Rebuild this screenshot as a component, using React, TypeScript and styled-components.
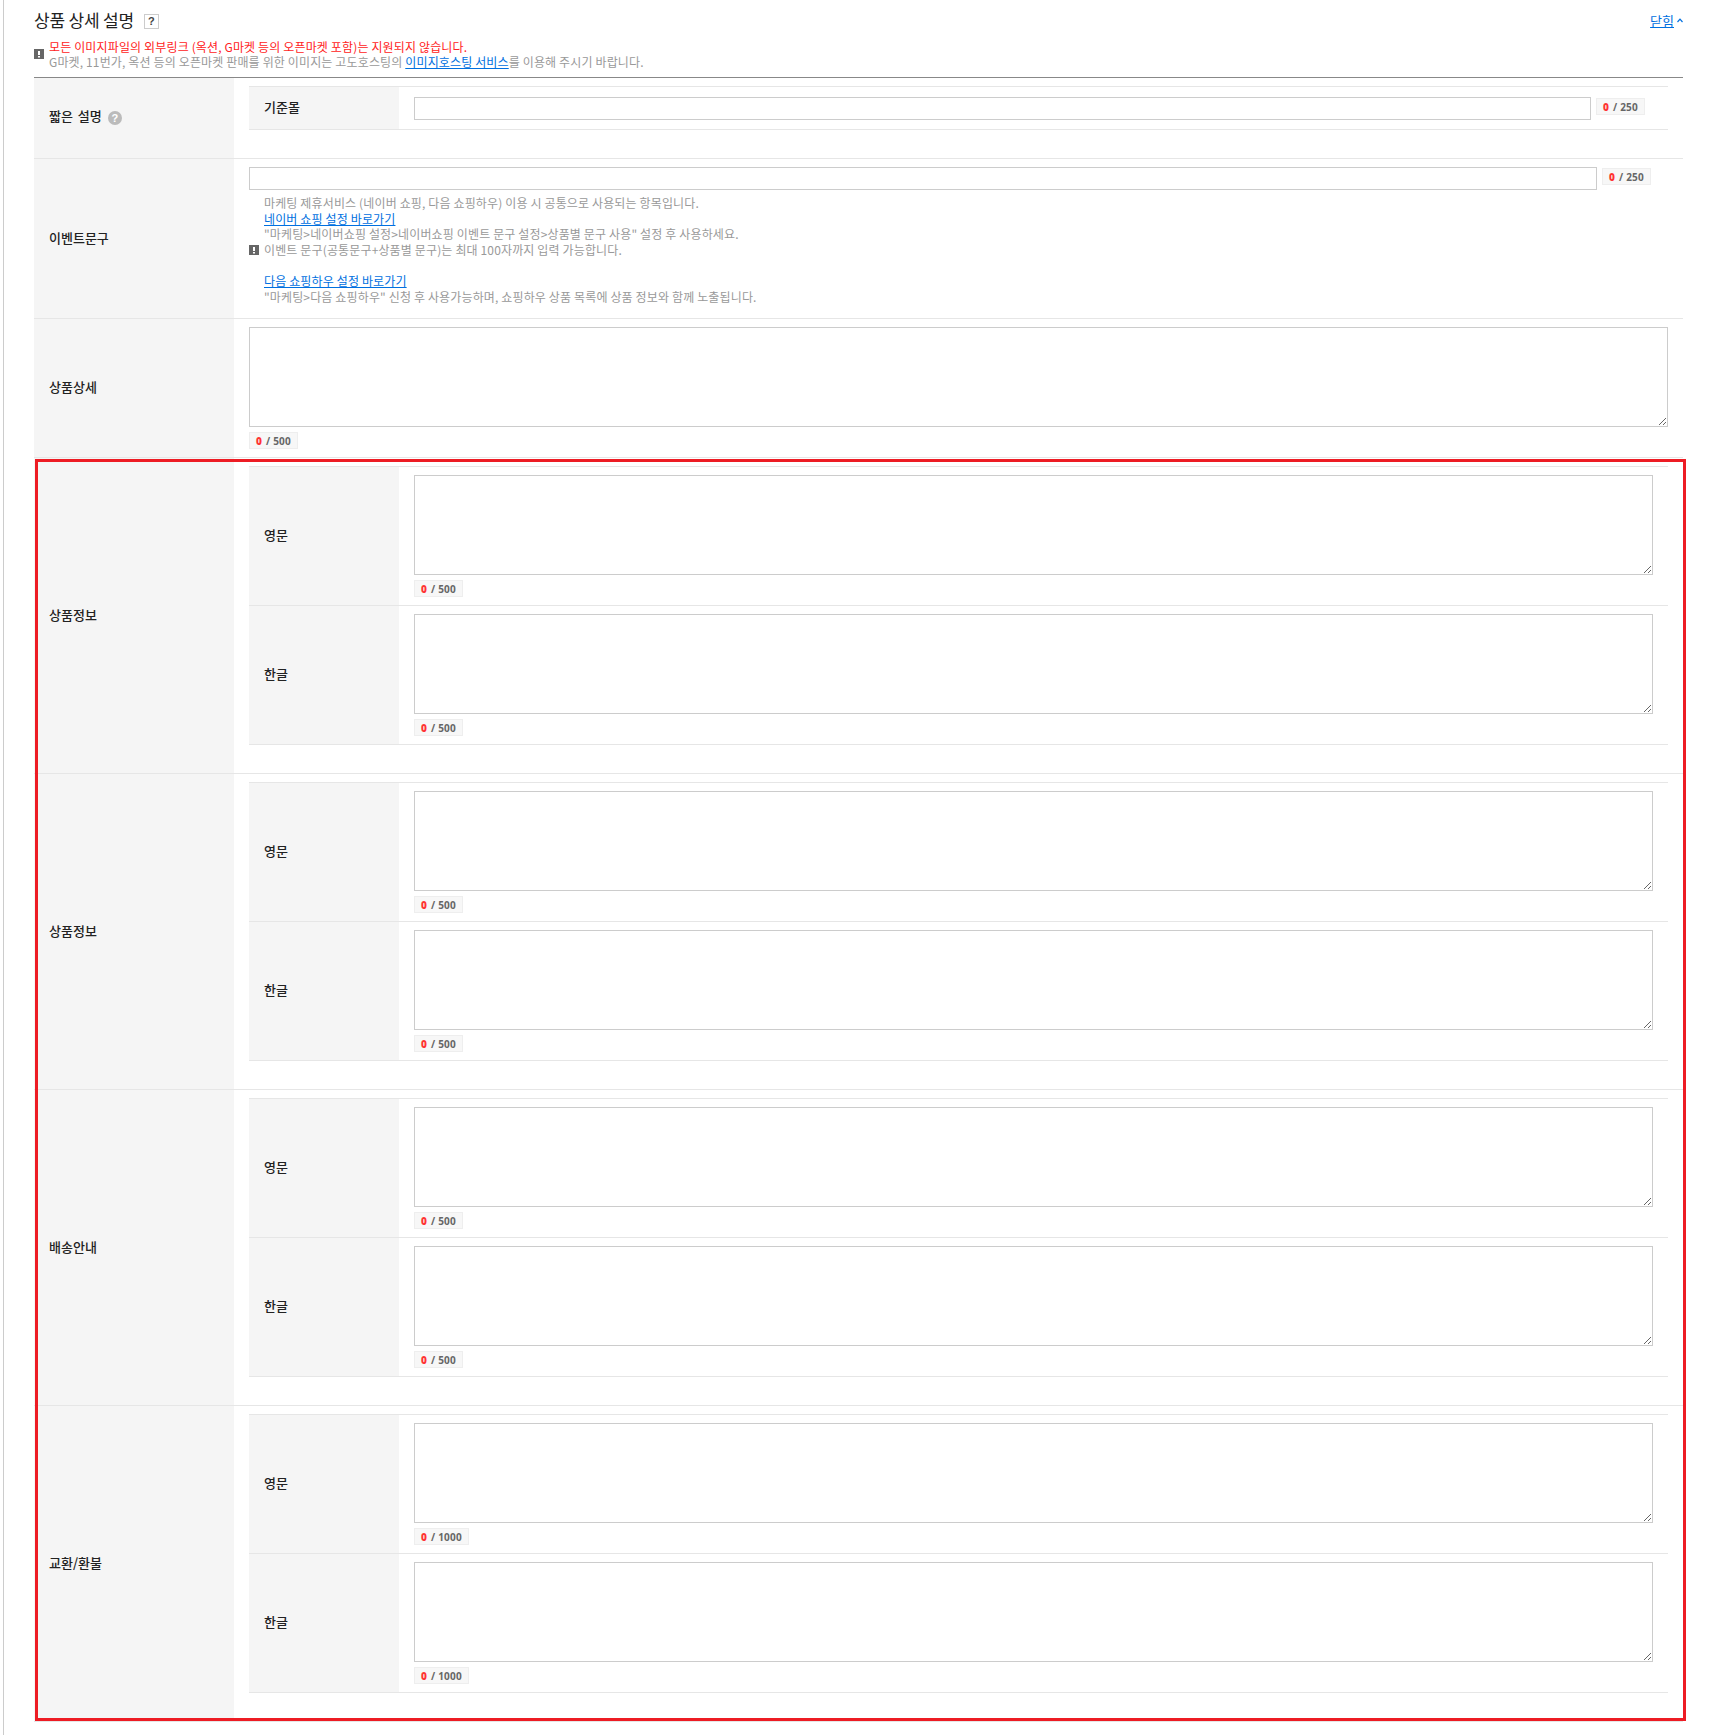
import React from "react";
import styled, { createGlobalStyle } from "styled-components";

const GlobalStyle = createGlobalStyle`
  html, body {
    margin: 0;
    padding: 0;
    background: #fff;
  }
  body {
    font-family: "Noto Sans CJK KR", "Noto Sans", sans-serif;
    font-size: 12px;
    color: #333;
  }
`;

const Page = styled.div`
  position: relative;
  box-sizing: border-box;
  min-height: 1735px;
  margin-left: 3px;
  padding: 0 30px;
  border-left: 1px solid #ccc;
`;

const Highlight = styled.div`
  position: absolute;
  top: 459px;
  left: 31px;
  width: 1651px;
  height: 1262px;
  box-sizing: border-box;
  border: 3px solid #ed1c24;
  pointer-events: none;
`;

const Header = styled.div`
  box-sizing: border-box;
  height: 78px;
  padding-top: 8px;
  border-bottom: 1px solid #888;
`;

const TitleRow = styled.div`
  display: flex;
  align-items: center;
  justify-content: space-between;
  height: 24px;
`;

const TitleGroup = styled.div`
  display: flex;
  align-items: center;
  gap: 10px;
`;

const Title = styled.h3`
  margin: 0;
  font-size: 17px;
  font-weight: 400;
  letter-spacing: -0.2px;
  color: #222;
  line-height: 24px;
`;

const HelpBox = styled.span`
  display: flex;
  align-items: center;
  justify-content: center;
  box-sizing: border-box;
  width: 15px;
  height: 15px;
  margin-top: 2px;
  border: 1px solid #ccc;
  font-family: "Liberation Sans", sans-serif;
  font-size: 11px;
  font-weight: 700;
  color: #444;
`;

const CloseLink = styled.a`
  display: flex;
  align-items: center;
  gap: 3px;
  font-size: 13px;
  color: #0070e0;
  span {
    text-decoration: underline;
  }
`;

const Notice = styled.div`
  display: flex;
  align-items: center;
  gap: ${({ $gap }: { $gap: number }) => $gap}px;
  margin-top: ${({ $top }: { $top: number }) => $top}px;
`;

const NoticeText = styled.div`
  font-size: 12px;
  letter-spacing: 0.14px;
  line-height: ${({ $line = 15.6 }: { $line?: number }) => $line}px;
  color: #999;
`;

const Red = styled.div`
  color: #f22;
`;

const Link = styled.a`
  color: #0070e0;
  text-decoration: underline;
`;

const Row = styled.div`
  display: flex;
  border-bottom: 1px solid #e6e6e6;
`;

const RowLabel = styled.div`
  display: flex;
  flex: 0 0 200px;
  align-items: center;
  gap: 6px;
  box-sizing: border-box;
  padding: 0 0 ${({ $lift = 3 }: { $lift?: number }) => $lift}px 15px;
  background: #f5f5f5;
  font-size: 13px;
  font-weight: 500;
  word-spacing: 2px;
  color: #222;
`;

const HelpCircle = styled.span`
  display: flex;
  align-items: center;
  justify-content: center;
  width: 14px;
  height: 14px;
  margin-top: 6px;
  border-radius: 50%;
  background: #bbb;
  font-family: "Liberation Sans", sans-serif;
  font-size: 11px;
  font-weight: 700;
  color: #fff;
`;

const RowBody = styled.div`
  flex: 1;
  min-width: 0;
  padding: 8px 15px ${({ $bottom }: { $bottom: number }) => $bottom}px;
`;

const SubRow = styled.div`
  display: flex;
  border-top: 1px solid #e6e6e6;
  &:last-child {
    border-bottom: 1px solid #e6e6e6;
  }
`;

const SubLabel = styled.div`
  display: flex;
  flex: 0 0 150px;
  align-items: center;
  box-sizing: border-box;
  padding: 0 0 3px 15px;
  background: #f5f5f5;
  font-size: 13px;
  font-weight: 500;
  color: #222;
`;

const SubBody = styled.div`
  flex: 1;
  min-width: 0;
  padding: 8px 15px;
`;

const SingleBody = styled(SubBody)`
  padding: 10px 15px 9px;
`;

const InputLine = styled.div`
  display: flex;
  align-items: flex-start;
  gap: 5px;
`;

const TextInput = styled.input`
  display: block;
  box-sizing: border-box;
  flex: 0 0 auto;
  width: ${({ $width }: { $width: number }) => $width}px;
  height: 23px;
  margin: 0;
  padding: 0 4px;
  border: 1px solid #ccc;
  border-radius: 0;
  outline: none;
  background: #fff;
`;

const Area = styled.textarea`
  display: block;
  box-sizing: border-box;
  width: 100%;
  height: 100px;
  margin: 0;
  padding: 4px;
  border: 1px solid #ccc;
  border-radius: 0;
  outline: none;
  resize: vertical;
  background: #fff;
`;

const Counter = styled.span`
  display: inline-flex;
  align-items: center;
  gap: 4px;
  box-sizing: border-box;
  height: 17px;
  margin-top: ${({ $top }: { $top: number }) => $top}px;
  padding: 0 6px;
  border: 1px solid #eee;
  background: #f7f7f7;
  font-family: "Open Sans", sans-serif;
  font-size: 10px;
  font-weight: 700;
  letter-spacing: 0.2px;
  color: #666;
  b {
    color: #f33;
  }
`;

const CounterLine = styled.div`
  display: flex;
  height: 17px;
  margin-top: 5px;
`;

const AlertIcon = () => (
  <svg width="10" height="10" viewBox="0 0 10 10" style={{ flex: "none" }}>
    <rect width="10" height="10" fill="#666" />
    <rect x="4" y="2" width="2" height="4" fill="#fff" />
    <rect x="4" y="7" width="2" height="1.5" fill="#fff" />
  </svg>
);

const Caret = () => (
  <svg width="6" height="5" viewBox="0 0 6 5" fill="none">
    <path d="M0.5 4 L3 1.2 L5.5 4" stroke="#0070e0" strokeWidth="1.2" />
  </svg>
);

const Count = ({ max, top }: { max: number; top: number }) => (
  <Counter $top={top}>
    <b>0</b> / {max}
  </Counter>
);

const AreaField = ({ max }: { max: number }) => (
  <>
    <Area />
    <CounterLine>
      <Count max={max} top={0} />
    </CounterLine>
  </>
);

const groups = [
  { label: "상품정보", max: 500 },
  { label: "상품정보", max: 500 },
  { label: "배송안내", max: 500 },
  { label: "교환/환불", max: 1000 },
];

export default function App() {
  return (
    <Page>
      <GlobalStyle />
      <Header>
        <TitleRow>
          <TitleGroup>
            <Title>상품 상세 설명</Title>
            <HelpBox>?</HelpBox>
          </TitleGroup>
          <CloseLink>
            <span>닫힘</span>
            <Caret />
          </CloseLink>
        </TitleRow>
        <Notice $gap={5} $top={7}>
          <AlertIcon />
          <NoticeText $line={15}>
            <Red>모든 이미지파일의 외부링크 (옥션, G마켓 등의 오픈마켓 포함)는 지원되지 않습니다.</Red>
            G마켓, 11번가, 옥션 등의 오픈마켓 판매를 위한 이미지는 고도호스팅의 <Link>이미지호스팅 서비스</Link>를 이용해 주시기 바랍니다.
          </NoticeText>
        </Notice>
      </Header>

      <Row>
        <RowLabel $lift={6}>
          짧은 설명 <HelpCircle>?</HelpCircle>
        </RowLabel>
        <RowBody $bottom={28}>
          <SubRow>
            <SubLabel>기준몰</SubLabel>
            <SingleBody>
              <InputLine>
                <TextInput $width={1177} />
                <Count max={250} top={1} />
              </InputLine>
            </SingleBody>
          </SubRow>
        </RowBody>
      </Row>

      <Row>
        <RowLabel>이벤트문구</RowLabel>
        <RowBody $bottom={14}>
          <InputLine>
            <TextInput $width={1348} />
            <Count max={250} top={1} />
          </InputLine>
          <Notice $gap={5} $top={5}>
            <AlertIcon />
            <NoticeText>
              <div>마케팅 제휴서비스 (네이버 쇼핑, 다음 쇼핑하우) 이용 시 공통으로 사용되는 항목입니다.</div>
              <div>
                <Link>네이버 쇼핑 설정 바로가기</Link>
              </div>
              <div>"마케팅&gt;네이버쇼핑 설정&gt;네이버쇼핑 이벤트 문구 설정&gt;상품별 문구 사용" 설정 후 사용하세요.</div>
              <div>이벤트 문구(공통문구+상품별 문구)는 최대 100자까지 입력 가능합니다.</div>
              <br />
              <div>
                <Link>다음 쇼핑하우 설정 바로가기</Link>
              </div>
              <div>"마케팅&gt;다음 쇼핑하우" 신청 후 사용가능하며, 쇼핑하우 상품 목록에 상품 정보와 함께 노출됩니다.</div>
            </NoticeText>
          </Notice>
        </RowBody>
      </Row>

      <Row>
        <RowLabel>상품상세</RowLabel>
        <RowBody $bottom={8}>
          <AreaField max={500} />
        </RowBody>
      </Row>

      {groups.map((group, i) => (
        <Row key={i}>
          <RowLabel>{group.label}</RowLabel>
          <RowBody $bottom={28}>
            <div>
              <SubRow>
                <SubLabel>영문</SubLabel>
                <SubBody>
                  <AreaField max={group.max} />
                </SubBody>
              </SubRow>
              <SubRow>
                <SubLabel>한글</SubLabel>
                <SubBody>
                  <AreaField max={group.max} />
                </SubBody>
              </SubRow>
            </div>
          </RowBody>
        </Row>
      ))}

      <Highlight />
    </Page>
  );
}
